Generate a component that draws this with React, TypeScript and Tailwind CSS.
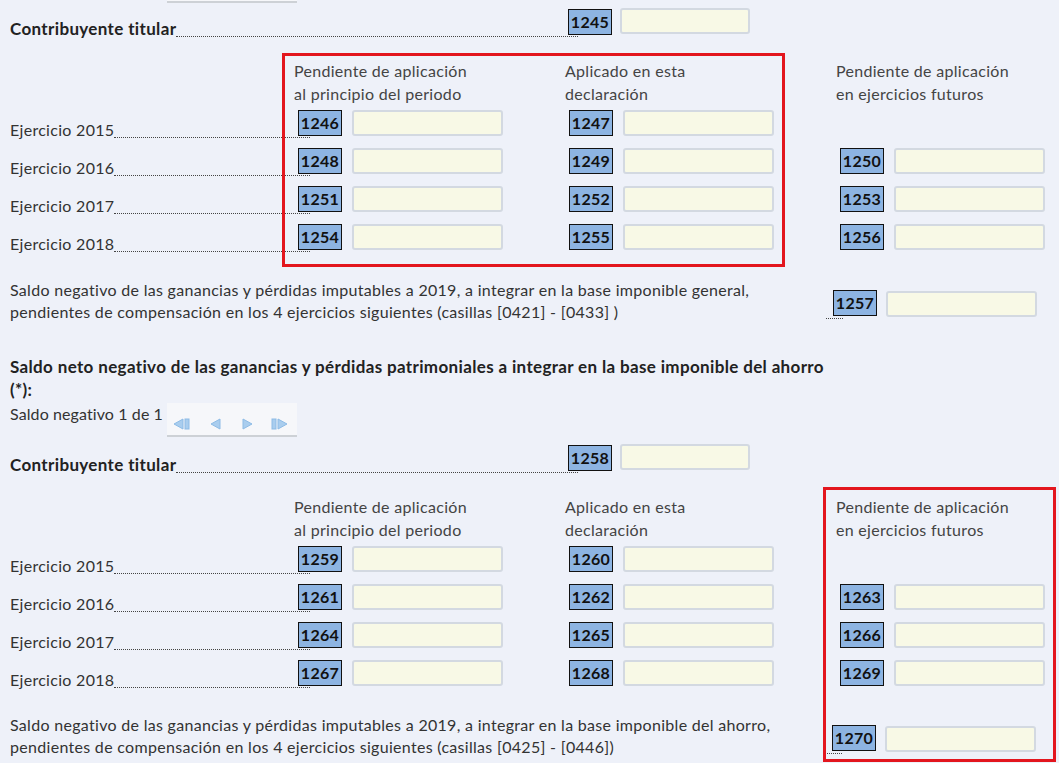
import React from "react";

type Row = { label: string; boxes: (string | null)[] };

const font = { fontFamily: "Lato, 'Open Sans', sans-serif" };

const tablaGeneral: Row[] = [
  { label: "Ejercicio 2015", boxes: ["1246", "1247", null] },
  { label: "Ejercicio 2016", boxes: ["1248", "1249", "1250"] },
  { label: "Ejercicio 2017", boxes: ["1251", "1252", "1253"] },
  { label: "Ejercicio 2018", boxes: ["1254", "1255", "1256"] },
];

const tablaAhorro: Row[] = [
  { label: "Ejercicio 2015", boxes: ["1259", "1260", null] },
  { label: "Ejercicio 2016", boxes: ["1261", "1262", "1263"] },
  { label: "Ejercicio 2017", boxes: ["1264", "1265", "1266"] },
  { label: "Ejercicio 2018", boxes: ["1267", "1268", "1269"] },
];

function Casilla({ num, className = "" }: { num: string; className?: string }) {
  return (
    <div
      className={`relative w-[44px] h-[26px] shrink-0 bg-[#8db4e2] border border-[#111] flex items-center justify-center text-[16px] font-bold text-[#111] leading-none tracking-[0.3px] ${className}`}
    >
      {num}
    </div>
  );
}

function Campo({ w = 151, className = "" }: { w?: number; className?: string }) {
  return (
    <div
      className={`h-[26px] shrink-0 bg-[#f8f9e6] border-2 border-[#d3d9e1] rounded-[3px] ${w === 130 ? "w-[130px]" : "w-[151px]"} ${className}`}
    />
  );
}

function Puntos({ className = "" }: { className?: string }) {
  return <div className={`h-0 border-b border-dotted border-[#444] ${className}`} />;
}

function Titular({ num }: { num: string }) {
  return (
    <div className="flex items-end">
      <div className="w-[568px] shrink-0 flex items-end">
        <span className="font-bold text-[#222] text-[17px] tracking-[0.35px] leading-4">Contribuyente titular</span>
        <Puntos className="flex-1" />
      </div>
      <Casilla num={num} className="-ml-[10px] mb-[2px]" />
      <Campo w={130} className="ml-[8px] mb-[3px]" />
    </div>
  );
}

function Cabecera() {
  return (
    <div className="flex pl-[284px] text-[16px] tracking-[0.3px] leading-[23px] text-[#444]">
      <div className="w-[271px] shrink-0">
        Pendiente de aplicación
        <br />
        al principio del periodo
      </div>
      <div className="w-[271px] shrink-0">
        Aplicado en esta
        <br />
        declaración
      </div>
      <div className="w-[200px] shrink-0">
        Pendiente de aplicación
        <br />
        en ejercicios futuros
      </div>
    </div>
  );
}

function Tabla({ rows }: { rows: Row[] }) {
  return (
    <div className="flex flex-col gap-[10px] mt-[5px]">
      {rows.map((r) => (
        <div key={r.label} className="flex items-end">
          <div className="w-[300px] shrink-0 flex items-end">
            <span className="text-[16px] tracking-[0.3px] leading-4 text-[#333]">{r.label}</span>
            <Puntos className="flex-1" />
          </div>
          {r.boxes.map((b, i) =>
            b ? (
              <div key={b} className={`flex mb-[2px] ${i === 0 ? "-ml-[12px]" : "ml-[66px]"}`}>
                <Casilla num={b} />
                <Campo className="ml-[10px]" />
              </div>
            ) : null
          )}
        </div>
      ))}
    </div>
  );
}

function Saldo({ num, children, left }: { num: string; children: React.ReactNode; left: number }) {
  return (
    <div className="flex items-end">
      <p
        className={`${left === 816 ? "w-[816px]" : "w-[815px]"} shrink-0 text-[16px] tracking-[0.3px] leading-[22px] text-[#333]`}
      >
        {children}
      </p>
      <Puntos className="w-[17px] mb-[4px]" />
      <Casilla num={num} className="-ml-[10px] mb-[7px]" />
      <Campo className="ml-[9px] mb-[6px]" />
    </div>
  );
}

function Navegador() {
  return (
    <div className="w-[130px] h-[34px] shrink-0 bg-[#f6f7fa] border-b-2 border-[#cdd1d6]">
      <svg width="130" height="32" viewBox="0 0 130 32">
        <g fill="#a9cdee" stroke="#8dbbe6" strokeWidth="1">
          {/* primero */}
          <path d="M16 16 L7 21 L16 26 Z" />
          <rect x="18" y="16" width="4" height="10" />
          {/* anterior */}
          <path d="M53 16 L44 21 L53 26 Z" />
          {/* siguiente */}
          <path d="M76 16 L85 21 L76 26 Z" />
          {/* último */}
          <rect x="105" y="16" width="4" height="10" />
          <path d="M111 16 L120 21 L111 26 Z" />
        </g>
      </svg>
    </div>
  );
}

export default function App() {
  return (
    <div className="relative w-[1059px] h-[763px] overflow-hidden bg-[#eef1f9]" style={font}>
      <div className="px-[10px]">
        {/* pie del navegador anterior */}
        <div className="ml-[157px] w-[130px] h-[3px] bg-[#f6f7fa] border-b-2 border-[#cdd1d6]" />

        <div className="mt-[5px]">
          <Titular num="1245" />
        </div>
        <div className="mt-[22px]">
          <Cabecera />
        </div>
        <Tabla rows={tablaGeneral} />

        <div className="mt-[27px]">
          <Saldo num="1257" left={816}>
            Saldo negativo de las ganancias y pérdidas imputables a 2019, a integrar en la base imponible general,
            <br />
            pendientes de compensación en los 4 ejercicios siguientes (casillas [0421] - [0433] )
          </Saldo>
        </div>

        <p className="mt-[32px] text-[17px] tracking-[0.35px] leading-[23px] font-bold text-[#222]">
          Saldo neto negativo de las ganancias y pérdidas patrimoniales a integrar en la base imponible del ahorro
          <br />
          (*):
        </p>
        <div className="mt-[2px] flex items-start">
          <span className="text-[16px] tracking-[0.1px] leading-[22px] text-[#333] w-[157px] shrink-0 whitespace-nowrap">
            Saldo negativo 1 de 1
          </span>
          <Navegador />
        </div>

        <div className="mt-[7px]">
          <Titular num="1258" />
        </div>
        <div className="mt-[22px]">
          <Cabecera />
        </div>
        <Tabla rows={tablaAhorro} />

        <div className="mt-[26px]">
          <Saldo num="1270" left={815}>
            Saldo negativo de las ganancias y pérdidas imputables a 2019, a integrar en la base imponible del ahorro,
            <br />
            pendientes de compensación en los 4 ejercicios siguientes (casillas [0425] - [0446])
          </Saldo>
        </div>
      </div>

      {/* recuadros resaltados */}
      <div className="pointer-events-none absolute left-[282px] top-[53px] w-[503px] h-[214px] border-[3px] border-[#e3161e]" />
      <div className="pointer-events-none absolute left-[823px] top-[487px] w-[233px] h-[275px] border-[3px] border-[#e3161e]" />
    </div>
  );
}
